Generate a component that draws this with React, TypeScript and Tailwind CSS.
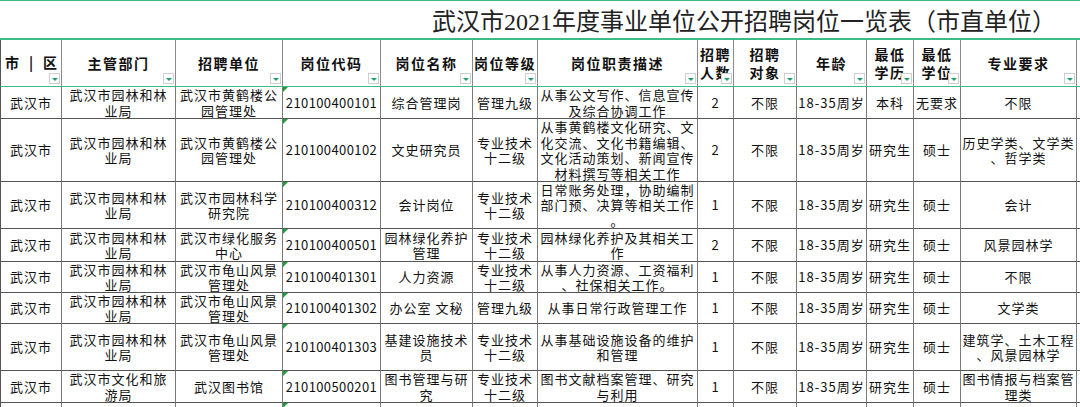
import React from "react"

// column template shared by header and body rows
const cols =
  "grid grid-cols-[62px_114px_107px_98px_92px_65px_160px_36px_63px_70px_47px_47px_116px_3px]"

const headers: string[][] = [
  ["市|区"],
  ["主管部门"],
  ["招聘单位"],
  ["岗位代码"],
  ["岗位名称"],
  ["岗位等级"],
  ["岗位职责描述"],
  ["招聘", "人数"],
  ["招聘", "对象"],
  ["年龄"],
  ["最低", "学历"],
  ["最低", "学位"],
  ["专业要求"],
]

const dept = ["武汉市园林和林", "业局"]
const huanghe = ["武汉市黄鹤楼公", "园管理处"]
const guishan = ["武汉市龟山风景", "管理处"]
const level12 = ["专业技术", "十二级"]

const rows: { h: string; cells: string[][] }[] = [
  {
    h: "h-[32px]",
    cells: [
      ["武汉市"], dept, huanghe, ["210100400101"], ["综合管理岗"], ["管理九级"],
      ["从事公文写作、信息宣传", "及综合协调工作"],
      ["2"], ["不限"], ["18-35周岁"], ["本科"], ["无要求"], ["不限"],
    ],
  },
  {
    h: "h-[63px]",
    cells: [
      ["武汉市"], dept, huanghe, ["210100400102"], ["文史研究员"], level12,
      ["从事黄鹤楼文化研究、文", "化交流、文化书籍编辑、", "文化活动策划、新闻宣传", "材料撰写等相关工作"],
      ["2"], ["不限"], ["18-35周岁"], ["研究生"], ["硕士"], ["历史学类、文学类", "、哲学类"],
    ],
  },
  {
    h: "h-[47px]",
    cells: [
      ["武汉市"], dept, ["武汉市园林科学", "研究院"], ["210100400312"], ["会计岗位"], level12,
      ["日常账务处理，协助编制", "部门预、决算等相关工作", "。"],
      ["1"], ["不限"], ["18-35周岁"], ["研究生"], ["硕士"], ["会计"],
    ],
  },
  {
    h: "h-[33px]",
    cells: [
      ["武汉市"], dept, ["武汉市绿化服务", "中心"], ["210100400501"], ["园林绿化养护", "管理"], level12,
      ["园林绿化养护及其相关工", "作"],
      ["2"], ["不限"], ["18-35周岁"], ["研究生"], ["硕士"], ["风景园林学"],
    ],
  },
  {
    h: "h-[31px]",
    cells: [
      ["武汉市"], dept, guishan, ["210100401301"], ["人力资源"], level12,
      ["从事人力资源、工资福利", "、社保相关工作。"],
      ["1"], ["不限"], ["18-35周岁"], ["研究生"], ["硕士"], ["不限"],
    ],
  },
  {
    h: "h-[31px]",
    cells: [
      ["武汉市"], dept, guishan, ["210100401302"], ["办公室 文秘"], ["管理九级"],
      ["从事日常行政管理工作"],
      ["1"], ["不限"], ["18-35周岁"], ["研究生"], ["硕士"], ["文学类"],
    ],
  },
  {
    h: "h-[47px]",
    cells: [
      ["武汉市"], dept, guishan, ["210100401303"], ["基建设施技术", "员"], level12,
      ["从事基础设施设备的维护", "和管理"],
      ["1"], ["不限"], ["18-35周岁"], ["研究生"], ["硕士"], ["建筑学、土木工程", "、风景园林学"],
    ],
  },
  {
    h: "h-[32px]",
    cells: [
      ["武汉市"], ["武汉市文化和旅", "游局"], ["武汉图书馆"], ["210100500201"], ["图书管理与研", "究"], level12,
      ["图书文献档案管理、研究", "与利用"],
      ["1"], ["不限"], ["18-35周岁"], ["研究生"], ["硕士"], ["图书情报与档案管", "理类"],
    ],
  },
  {
    h: "h-[47px]",
    cells: [[], [], [], [], [], [], [], [], [], [], [], [], []],
  },
]

function FilterButton() {
  return (
    <div className="absolute right-[1px] bottom-[2px] flex h-[11px] w-[11px] items-center justify-center border border-[#cfcfcf] bg-white">
      <div className="mt-[2px] h-0 w-0 border-x-[3px] border-t-[3px] border-x-transparent border-t-[#1f9f6c]" />
    </div>
  )
}

function HeadCell({ lines, index }: { lines: string[]; index: number }) {
  return (
    <div
      className={`relative flex items-center justify-center border-r border-b border-r-[#8a8a8a] border-b-[#3dbb86] ${
        index === 0 ? "border-l border-l-[#555]" : ""
      }`}
    >
      {lines[0] === "市|区" ? (
        <div className="mb-[2px] flex w-full justify-between px-[4px] text-[14px] font-bold">
          <span>市</span>
          <span>|</span>
          <span>区</span>
        </div>
      ) : (
        <div className="text-center text-[14px] leading-[18px] font-bold tracking-[1.5px]">
          {lines.map((l, i) => (
            <div key={i}>{l}</div>
          ))}
        </div>
      )}
      <FilterButton />
    </div>
  )
}

function BodyCell({ lines, index }: { lines: string[]; index: number }) {
  return (
    <div
      className={`relative flex items-center justify-center overflow-hidden border-r border-b border-r-[#7a7a7a] border-b-[#555] ${
        index === 0 ? "border-l border-l-[#555]" : ""
      }`}
    >
      {index === 3 && (
        <div className="absolute top-0 left-0 h-0 w-0 border-t-[5px] border-r-[5px] border-t-[#1f9d3a] border-r-transparent" />
      )}
      <div className={`text-center text-[13px] leading-[15.5px] whitespace-nowrap ${index === 3 ? "tracking-[0.4px]" : "tracking-[1px]"}`}>
        {lines.map((l, i) => (
          <div key={i}>{l}</div>
        ))}
      </div>
    </div>
  )
}

export default function App() {
  return (
    <div
      className="h-[407px] w-[1080px] overflow-hidden bg-white text-[#111]"
      style={{ fontFamily: '"Noto Sans CJK SC", sans-serif' }}
    >
      {/* title row */}
      <div className="flex h-[40px] items-center border-t border-b-2 border-t-[#3dbb86] border-b-[#3dbb86] pt-[4px] pl-[432px]">
        <span
          className="text-[24px] whitespace-nowrap text-[#222]"
          style={{ fontFamily: '"Liberation Serif", "Noto Sans CJK SC", serif' }}
        >
          武汉市2021年度事业单位公开招聘岗位一览表（市直单位）
        </span>
      </div>

      {/* header row */}
      <div className={`${cols} h-[47px]`}>
        {headers.map((h, i) => (
          <HeadCell key={i} lines={h} index={i} />
        ))}
        <div className="border-b border-b-[#3dbb86]" />
      </div>

      {rows.map((r, ri) => (
        <div key={ri} className={`${cols} ${r.h}`}>
          {r.cells.map((c, ci) => (
            <BodyCell key={ci} lines={c} index={ci} />
          ))}
          <div className="border-b border-b-[#555]" />
        </div>
      ))}
    </div>
  )
}
